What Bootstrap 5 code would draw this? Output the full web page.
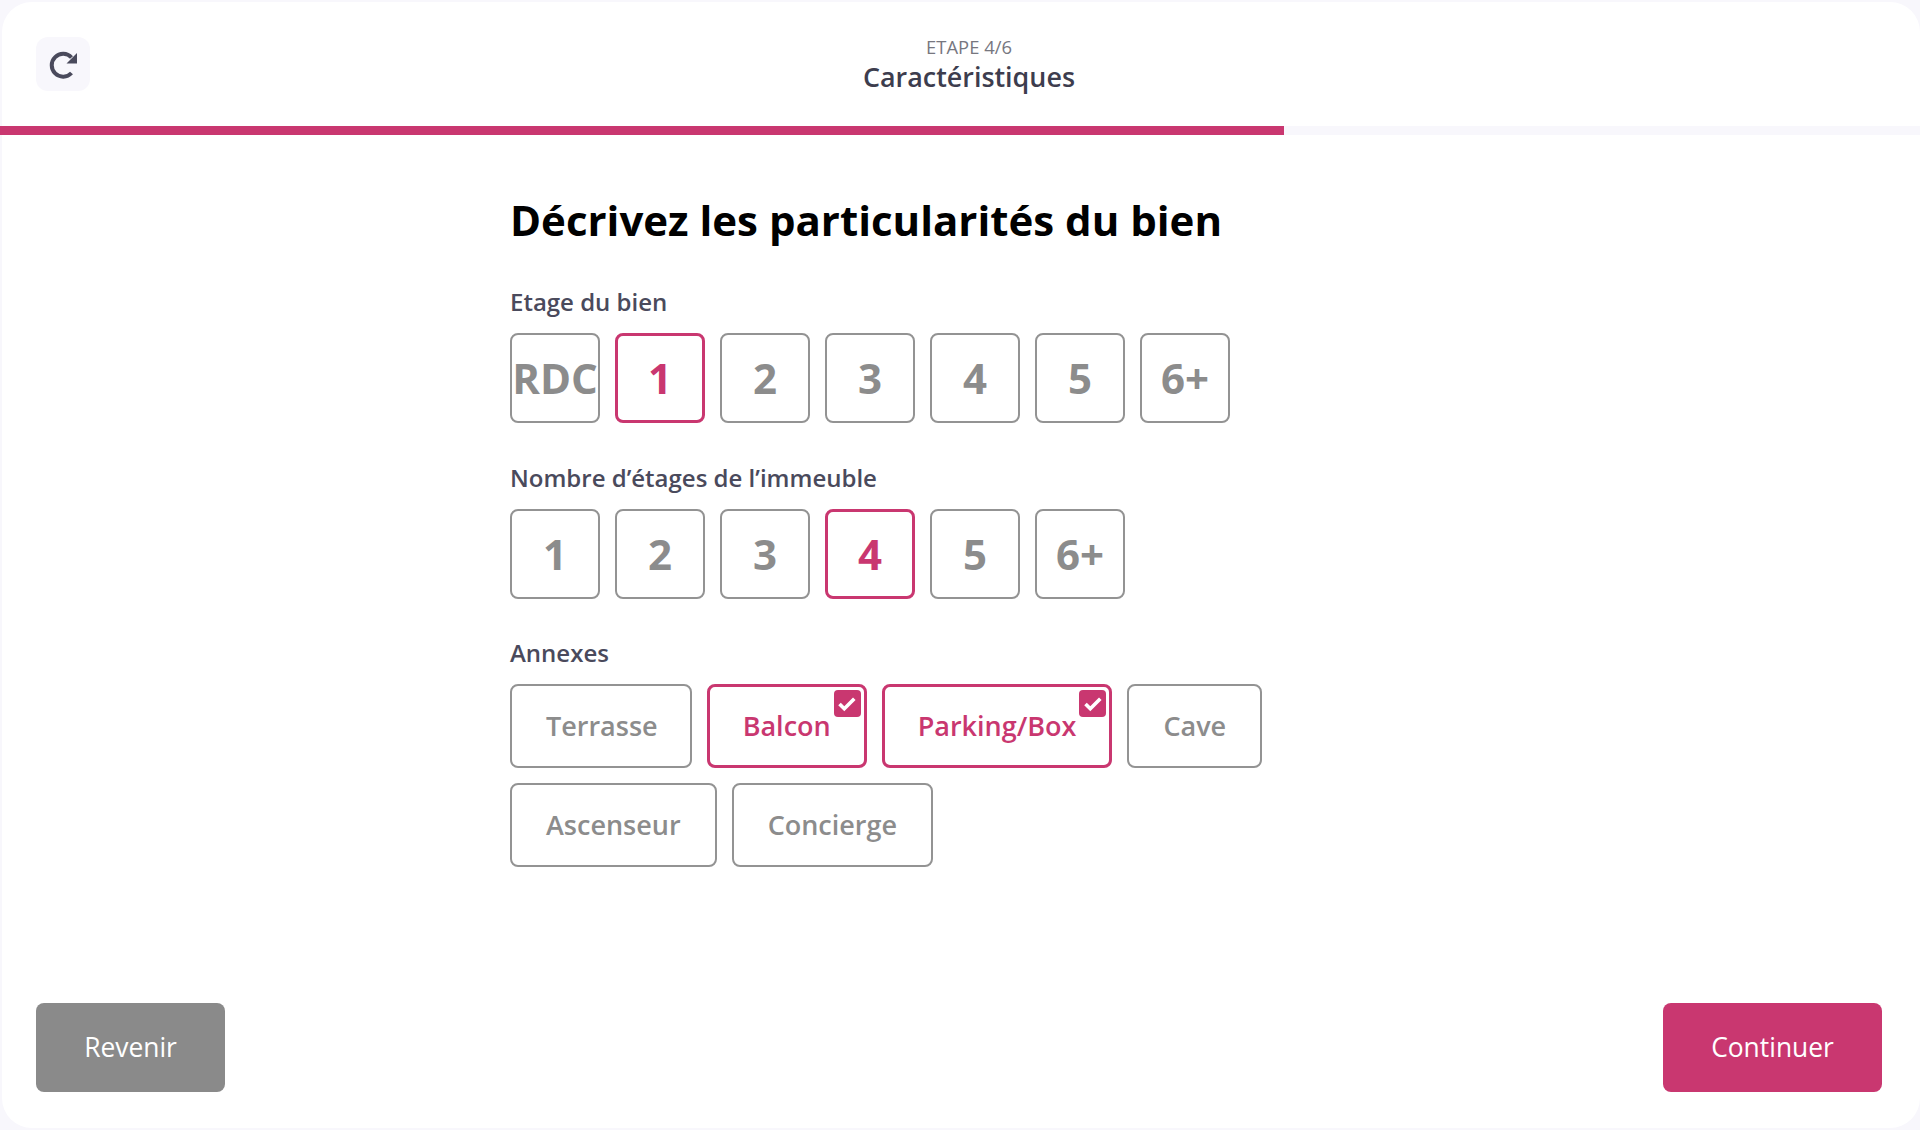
<!DOCTYPE html>
<html lang="fr">
<head>
<meta charset="UTF-8" />
<meta name="viewport" content="width=device-width, initial-scale=1.0" />
<title>Caractéristiques</title>
<link href="https://cdn.jsdelivr.net/npm/bootstrap@5.3.0/dist/css/bootstrap.min.css" rel="stylesheet" />
<style>
  html, body { height: 100%; }
  body { font-family: "Open Sans", sans-serif; background: #f8f7fc; color: #4a4a5c; }
  .shell { height: 1130px; padding: 2px 0 2px 2px; }
  .panel { height: 100%; background: #fff; border-radius: 30px; }
  .topbar { height: 124px; padding: 0 34px; position: relative; }
  .reload { width: 54px; height: 54px; background: #f8f7fc; border: 0; border-radius: 12px; padding: 0; }
  .step-title { position: absolute; left: 16px; right: 0; top: 32px; text-align: center; }
  .step-num { font-size: 18.4px; line-height: 25px; color: #77777f; }
  .step-name { font-size: 26.9px; line-height: 36px; font-weight: 600; color: #3d3d4e; }
  .track { height: 9px; background: #f8f7fc; margin-left: -2px; }
  .track-fill { width: 1284px; height: 9px; background: #c93770; }
  .form-area { padding: 56px 0 0 508px; }
  .heading { font-size: 42px; line-height: 58px; font-weight: 700; color: #000; margin: 0 0 36px; }
  .field-label { font-size: 24px; line-height: 33px; font-weight: 600; color: #4a4a5c; margin-bottom: 15px; }
  .opts { gap: 15px; margin-bottom: 38px; }
  .opts-last { margin-bottom: 37px; }
  .opt { width: 90px; height: 90px; background: #fff; border: 2px solid #939393; border-radius: 8px; color: #8c8c8c; font-size: 42px; font-weight: 700; padding: 0; line-height: 1; }
  .tag { position: relative; height: 84px; padding: 0 34px; background: #fff; border: 2px solid #939393; border-radius: 8px; color: #8c8c8c; font-size: 27px; font-weight: 600; }
  .tag:first-child { padding-right: 32px; }
  .opt.on, .tag.on { border: 3px solid #c93770; color: #c93770; }
  .tag.on { padding: 0 33px; }
  .tag-wrap { gap: 15px; width: 780px; }
  .tick { position: absolute; top: 3px; right: 3px; width: 27px; height: 27px; background: #c93770; border-radius: 4px; }
  .footer-bar { padding: 0 38px 36px 34px; }
  .act { height: 89px; border: 0; border-radius: 8px; color: #fff; font-size: 26.4px; font-weight: 500; padding-top: 2px; }
  .act-back { width: 189px; background: #8a8a8a; }
  .act-next { width: 219px; background: #c93770; }
</style>
</head>
<body>
<div class="shell">
  <div class="panel d-flex flex-column">

    <div class="topbar d-flex align-items-center">
      <button class="reload d-flex align-items-center justify-content-center" type="button" aria-label="Recommencer">
        <svg width="30" height="30" viewBox="0 0 30 30">
          <path d="M23.5 24A11.4 11.4 0 1 1 23.5 8.5" fill="none" stroke="#4a4a5c" stroke-width="4"/>
          <path d="M29 4v10.5H18.5z" fill="#4a4a5c"/>
        </svg>
      </button>
      <div class="step-title">
        <div class="step-num">ETAPE 4/6</div>
        <div class="step-name">Caractéristiques</div>
      </div>
    </div>

    <div class="track"><div class="track-fill"></div></div>

    <div class="form-area flex-grow-1">
      <h1 class="heading">Décrivez les particularités du bien</h1>

      <div class="field-label">Etage du bien</div>
      <div class="opts d-flex">
        <button class="opt" type="button">RDC</button>
        <button class="opt on" type="button">1</button>
        <button class="opt" type="button">2</button>
        <button class="opt" type="button">3</button>
        <button class="opt" type="button">4</button>
        <button class="opt" type="button">5</button>
        <button class="opt" type="button">6+</button>
      </div>

      <div class="field-label">Nombre d’étages de l’immeuble</div>
      <div class="opts opts-last d-flex">
        <button class="opt" type="button">1</button>
        <button class="opt" type="button">2</button>
        <button class="opt" type="button">3</button>
        <button class="opt on" type="button">4</button>
        <button class="opt" type="button">5</button>
        <button class="opt" type="button">6+</button>
      </div>

      <div class="field-label">Annexes</div>
      <div class="tag-wrap d-flex flex-wrap">
        <button class="tag" type="button">Terrasse</button>
        <button class="tag on" type="button">Balcon
          <span class="tick d-flex align-items-center justify-content-center">
            <svg width="20" height="16" viewBox="0 0 20 16"><path d="M2.5 8l4.8 4.8 10-10" fill="none" stroke="#fff" stroke-width="3.6"/></svg>
          </span>
        </button>
        <button class="tag on" type="button">Parking/Box
          <span class="tick d-flex align-items-center justify-content-center">
            <svg width="20" height="16" viewBox="0 0 20 16"><path d="M2.5 8l4.8 4.8 10-10" fill="none" stroke="#fff" stroke-width="3.6"/></svg>
          </span>
        </button>
        <button class="tag" type="button">Cave</button>
        <button class="tag" type="button">Ascenseur</button>
        <button class="tag" type="button">Concierge</button>
      </div>
    </div>

    <div class="footer-bar d-flex justify-content-between">
      <button class="act act-back" type="button">Revenir</button>
      <button class="act act-next" type="button">Continuer</button>
    </div>

  </div>
</div>
<script src="https://cdn.jsdelivr.net/npm/bootstrap@5.3.0/dist/js/bootstrap.bundle.min.js"></script>
</body>
</html>
